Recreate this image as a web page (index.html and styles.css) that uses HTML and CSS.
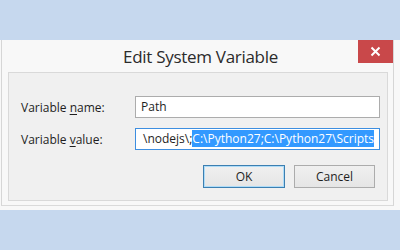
FILE: index.html
```html
<!DOCTYPE html>
<html lang="en">
<head>
  <meta charset="UTF-8">
  <title>Edit System Variable</title>
  <link rel="stylesheet" href="styles.css">
</head>
<body>
  <div class="window">
    <div class="frame">
      <div class="titlebar">
        <h1 class="title">Edit System Variable</h1>
        <button class="btn-close" aria-label="Close">
          <svg width="11" height="11" viewBox="0 0 11 11">
            <path d="M1.5 1.5 L9.5 9.5 M9.5 1.5 L1.5 9.5" stroke="#fff" stroke-width="2" fill="none"/>
          </svg>
        </button>
      </div>
      <div class="panel">
        <div class="row">
          <label class="label">Variable <u>n</u>ame:</label>
          <div class="field">Path</div>
        </div>
        <div class="row">
          <label class="label">Variable <u>v</u>alue:</label>
          <div class="field focused">\nodejs\;<span class="sel">C:\Python27;C:\Python27\Scripts</span></div>
        </div>
        <div class="actions">
          <button class="btn btn-default">OK</button>
          <button class="btn">Cancel</button>
        </div>
      </div>
    </div>
  </div>
</body>
</html>
```

FILE: styles.css
```css
body {
  margin: 0;
  background: #c6d8ee;
  font-family: "Open Sans", "Noto Sans", sans-serif;
  font-size: 12px;
  color: #1e1e1e;
}

.window {
  margin-top: 40px;
  height: 170px;
  background: #f8f8f8;
}

.frame {
  margin-left: 1px;
  width: 391px;
  height: 165px;
  border-left: 1px solid #d6d6d6;
  border-right: 1px solid #d6d6d6;
  border-bottom: 1px solid #dadada;
}

.titlebar {
  position: relative;
  height: 32px;
  display: flex;
  justify-content: center;
  align-items: center;
}

.title {
  margin: 0;
  font-size: 17px;
  font-weight: normal;
  color: #2b2b2b;
  letter-spacing: -0.3px;
  padding-left: 6px;
}

.btn-close {
  position: absolute;
  top: 0;
  right: 0;
  width: 35px;
  height: 23px;
  border: none;
  padding: 0;
  background: #c9484a;
  display: flex;
  align-items: center;
  justify-content: center;
}

.panel {
  margin-left: 6px;
  width: 380px;
  height: 129px;
  background: #f0f0f0;
  border: 1px solid #d9d9d9;
  padding: 23px 0 0 12px;
  box-sizing: border-box;
}

.row {
  display: flex;
  align-items: center;
  margin-bottom: 10px;
}

.label {
  width: 114px;
}

.label u {
  text-underline-offset: 2px;
}

.field {
  width: 245px;
  height: 22px;
  box-sizing: border-box;
  border: 1px solid #acacac;
  background: #fff;
  padding: 0 5px;
  line-height: 20px;
  white-space: nowrap;
  overflow: hidden;
}

.field.focused {
  border-color: #3d8ee0;
  padding-left: 7px;
}

.sel {
  background: #3399ff;
  color: #fff;
}

.actions {
  display: flex;
  justify-content: flex-end;
  gap: 9px;
  margin-top: 15px;
  padding-right: 12px;
}

.btn {
  width: 81px;
  height: 23px;
  font-family: inherit;
  font-size: 12px;
  color: #1e1e1e;
  border: 1px solid #acacac;
  background: linear-gradient(#f0f0f0, #e5e5e5);
  padding: 0;
}

.btn-default {
  width: 82px;
  border-color: #3c7fb1;
  box-shadow: inset 0 0 0 1px #aedcf8;
}
```
